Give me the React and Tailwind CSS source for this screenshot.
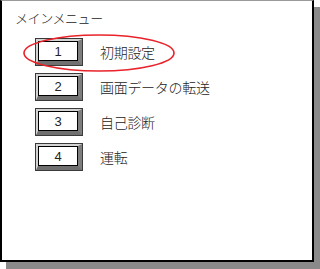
import React from 'react'

const items = [
    { no: '1', label: '初期設定' },
    { no: '2', label: '画面データの転送' },
    { no: '3', label: '自己診断' },
    { no: '4', label: '運転' },
]

const KeyButton = ({ no }) => (
    <div className="w-[48px] h-[28px] border border-[#3a3a3a] bg-white">
        <div className="w-full h-full border-t-[2px] border-l-[2px] border-r-[4px] border-b-[4px] border-t-[#d4d4d4] border-l-[#d4d4d4] border-r-[#7e7e7e] border-b-[#707070]">
            <div className="w-full h-full bg-white border border-black flex items-center justify-center text-[13px] leading-none text-[#222] font-['Liberation_Sans',sans-serif]">
                {no}
            </div>
        </div>
    </div>
)

export default function App() {
    return (
        <div className="w-[320px] h-[269px] bg-white overflow-hidden font-['Noto_Sans_CJK_JP',sans-serif] font-light">
            <div className="relative w-[314px] h-[262px] bg-white border-l-2 border-r-2 border-b-2 border-t border-black border-t-[#9a9a9a] shadow-[6px_7px_0_#8a8a8a]">
                <p className="pl-[13px] pt-[8px] text-[13px] leading-[18px] tracking-[-0.4px] text-[#222]">メインメニュー</p>

                <div className="flex flex-col gap-[7px] pl-[33px] pt-[11px]">
                    {items.map((item) => (
                        <div key={item.no} className="flex items-center gap-[17px]">
                            <KeyButton no={item.no} />
                            <span className="text-[14px] leading-none tracking-[-0.3px] text-[#222]">{item.label}</span>
                        </div>
                    ))}
                </div>

                <svg className="absolute left-[19px] top-[32px]" width="158" height="42" viewBox="0 0 158 42">
                    <ellipse cx="78" cy="20" rx="75" ry="18" fill="none" stroke="#e8232a" strokeWidth="1.6" />
                </svg>
            </div>
        </div>
    )
}
